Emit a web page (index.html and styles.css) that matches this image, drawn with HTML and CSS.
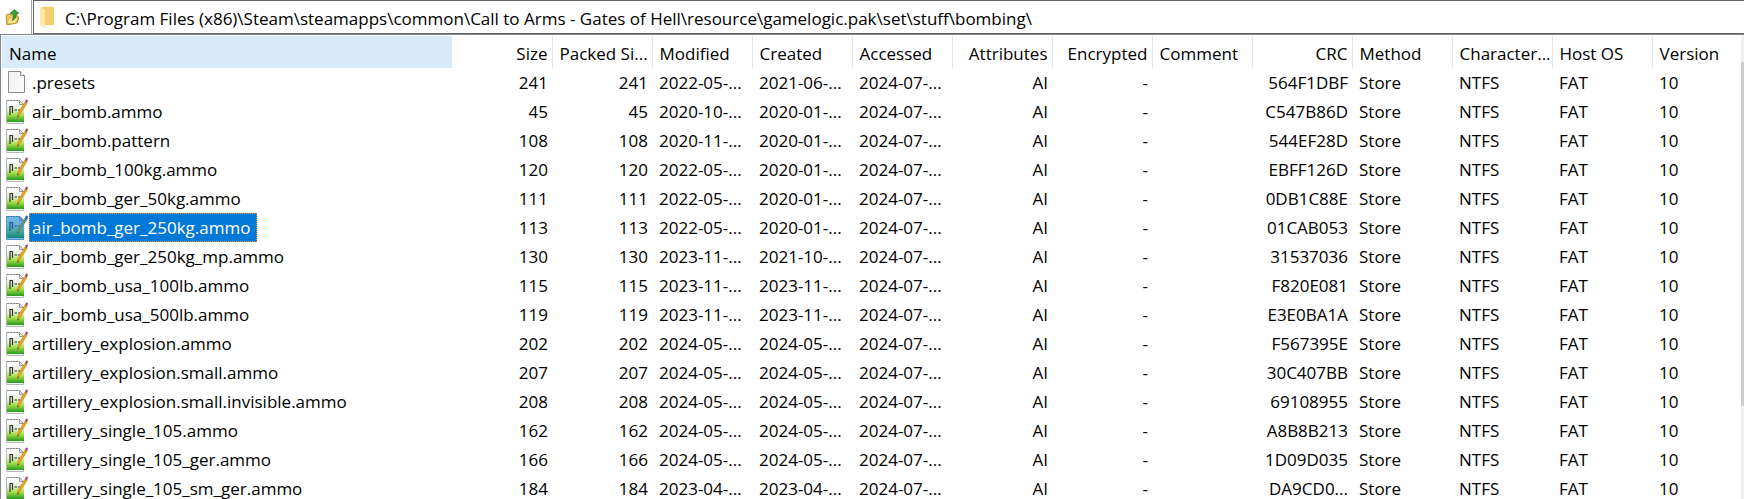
FILE: index.html
```html
<!DOCTYPE html>
<html lang="en">
<head>
  <meta charset="UTF-8">
  <meta name="viewport" content="width=device-width, initial-scale=1.0">
  <title>bombing</title>
  <link rel="stylesheet" href="styles.css">
</head>
<body>

  <!-- shared icons -->
  <svg class="defs" aria-hidden="true">
    <defs>
      <linearGradient id="green" x1="0" y1="0" x2="0" y2="1">
        <stop offset="0" stop-color="#f1f4ec"/>
        <stop offset="0.3" stop-color="#e2efd0"/>
        <stop offset="0.6" stop-color="#a4de48"/>
        <stop offset="1" stop-color="#259a1c"/>
      </linearGradient>
      <linearGradient id="paper" x1="0" y1="0" x2="1" y2="1">
        <stop offset="0" stop-color="#f1f2f3"/>
        <stop offset="1" stop-color="#fafbfc"/>
      </linearGradient>
    </defs>
    <symbol id="icon-file" viewBox="0 0 24 26">
      <path d="M4.5 1.500h12l4 4v17h-16z" fill="url(#paper)" stroke="#8c8c8c"/>
      <path d="M16.500 1.500v4h4" fill="#fff" stroke="#8c8c8c"/>
    </symbol>
    <symbol id="icon-note" viewBox="0 0 24 26">
      <path d="M2.500 1.500h13l4 4v19h-17z" fill="#fbfbfb" stroke="#b4b8b4"/>
      <path d="M3 1.500h13" stroke="#888" stroke-dasharray="2 1"/>
      <path d="M15.500 1.500v4h4z" fill="#e4e4e4" stroke="#999"/>
      <path d="M3 6h17v17H3z" fill="url(#green)"/>
      <path d="M6 16V7.500M8.500 7.500V14M5.500 7.500H9M10.500 11h2.500M14 11h2" fill="none" stroke="#333" stroke-width="1.200"/>
      <path d="M13.500 18.500l0.500-4.500 7-11 2 1.500-7 11z" fill="#e8a520" stroke="#b87818" stroke-width="0.500"/>
      <path d="M21 3l1-2.500 2 0.500-1 3.500z" fill="#9a4a62"/>
      <path d="M13.500 18.500l0.200-2 1.200 0.800z" fill="#333"/>
    </symbol>
  </svg>

  <div class="toolbar">
    <button class="up" type="button" aria-label="Up one level">
      <svg width="16" height="16" viewBox="0 0 16 16">
        <path d="M1 6l4-1 1 1 6-1v3l2 0-2 6-10 2z" fill="#f0cf5a" stroke="#b89030"/>
        <path d="M2 15l2-6 9-1-2 6z" fill="#fbe88c" stroke="#c8a040" stroke-width="0.700"/>
        <path d="M5 4.500L9.500 0.500 14 4.500h-3c0.500 4-1 6-4 7 1.500-2 1.700-4 1.200-7z" fill="#35a535" stroke="#14701c" stroke-width="0.700"/>
      </svg>
    </button>
    <div class="address">
      <svg width="14" height="22" viewBox="0 0 14 22">
        <path d="M2 1h12v18H2z" fill="#f5cf6c"/>
        <path d="M0 1l5 3v18l-5-3z" fill="#ffe9a8"/>
      </svg>
      <input type="text" aria-label="Path" value="C:\Program Files (x86)\Steam\steamapps\common\Call to Arms - Gates of Hell\resource\gamelogic.pak\set\stuff\bombing\">
    </div>
  </div>

  <div class="panel">
    <table>
      <thead>
        <tr>
          <th class="name sorted">Name</th>
          <th class="num">Size</th>
          <th class="num">Packed Si...</th>
          <th>Modified</th>
          <th>Created</th>
          <th>Accessed</th>
          <th class="num">Attributes</th>
          <th class="num">Encrypted</th>
          <th>Comment</th>
          <th class="num">CRC</th>
          <th>Method</th>
          <th>Character...</th>
          <th>Host OS</th>
          <th class="last">Version</th>
        </tr>
      </thead>
      <tbody id="files"></tbody>
    </table>
    <div class="scrollbar"><div class="thumb"></div></div>
  </div>

  <script>
    // name, size, modified, created, crc
    const files = [
      [".presets", 241, "2022-05-...", "2021-06-...", "564F1DBF"],
      ["air_bomb.ammo", 45, "2020-10-...", "2020-01-...", "C547B86D"],
      ["air_bomb.pattern", 108, "2020-11-...", "2020-01-...", "544EF28D"],
      ["air_bomb_100kg.ammo", 120, "2022-05-...", "2020-01-...", "EBFF126D"],
      ["air_bomb_ger_50kg.ammo", 111, "2022-05-...", "2020-01-...", "0DB1C88E"],
      ["air_bomb_ger_250kg.ammo", 113, "2022-05-...", "2020-01-...", "01CAB053"],
      ["air_bomb_ger_250kg_mp.ammo", 130, "2023-11-...", "2021-10-...", "31537036"],
      ["air_bomb_usa_100lb.ammo", 115, "2023-11-...", "2023-11-...", "F820E081"],
      ["air_bomb_usa_500lb.ammo", 119, "2023-11-...", "2023-11-...", "E3E0BA1A"],
      ["artillery_explosion.ammo", 202, "2024-05-...", "2024-05-...", "F567395E"],
      ["artillery_explosion.small.ammo", 207, "2024-05-...", "2024-05-...", "30C407BB"],
      ["artillery_explosion.small.invisible.ammo", 208, "2024-05-...", "2024-05-...", "69108955"],
      ["artillery_single_105.ammo", 162, "2024-05-...", "2024-05-...", "A8B8B213"],
      ["artillery_single_105_ger.ammo", 166, "2024-05-...", "2024-05-...", "1D09D035"],
      ["artillery_single_105_sm_ger.ammo", 184, "2023-04-...", "2023-04-...", "DA9CD0..."]
    ];
    const selected = "air_bomb_ger_250kg.ammo";

    document.getElementById("files").innerHTML = files.map(([name, size, modified, created, crc]) => `
      <tr class="${name === selected ? "selected" : ""}">
        <td><div class="file">
          <svg width="24" height="26">
            <use href="#${name === ".presets" ? "icon-file" : "icon-note"}"/>
            <path class="tint" d="M2 1h14l4 4 2-4 2 0v3l-4 5v16H2z"/>
          </svg>
          <span class="label">${name}</span>
        </div></td>
        <td class="num">${size}</td>
        <td class="num">${size}</td>
        <td>${modified}</td>
        <td>${created}</td>
        <td>2024-07-...</td>
        <td class="num">AI</td>
        <td class="num">-</td>
        <td></td>
        <td class="num">${crc}</td>
        <td>Store</td>
        <td>NTFS</td>
        <td>FAT</td>
        <td>10</td>
      </tr>`).join("");
  </script>
</body>
</html>
```
FILE: styles.css
```css
* {
  box-sizing: border-box;
}
body {
  margin: 0;
  background: #fff;
  color: #000;
  font-family: "Open Sans", "Noto Sans", sans-serif;
  font-size: 17px;
  overflow: hidden;
}
.defs {
  position: absolute;
  width: 0;
  height: 0;
}
.toolbar {
  display: flex;
  height: 34px;
}
.up {
  width: 32px;
  padding: 0 0 0 5px;
  border: none;
  border-right: 1px solid #a0a0a0;
  background: #fff;
}
.up svg {
  display: block;
}
.address {
  flex: 1;
  display: flex;
  align-items: center;
  gap: 11px;
  margin-left: 1px;
  padding-left: 6px;
  border: 1px solid #646464;
  border-right: none;
}
.address input {
  flex: 1;
  height: 32px;
  padding: 2px 0 0;
  border: none;
  outline: none;
  background: none;
  color: inherit;
  font: inherit;
}
.panel {
  display: flex;
  border-top: 1px solid #828790;
  border-left: 1px solid #828790;
}
table {
  flex: 1;
  table-layout: fixed;
  width: 100%;
  margin: 1px 0 0 1px;
  border-collapse: collapse;
}
th, td {
  width: 100px;
  height: 29px;
  padding: 0 4px 0 7px;
  font-weight: normal;
  line-height: 29px;
  text-align: left;
  white-space: nowrap;
}
th {
  height: 32px;
  padding-top: 2px;
  border-right: 1px solid #e5e5e5;
}
th.name {
  width: 450px;
}
th.last {
  width: auto;
  border-right: none;
}
.sorted {
  background: #d9ebf9;
  border-right: none;
}
.num {
  text-align: right;
}
.file {
  display: flex;
  align-items: center;
  gap: 1px;
  margin-left: -5px;
}
.label {
  padding: 0 7px 0 3px;
}
.tint {
  display: none;
  fill: #0078d7;
  opacity: 0.55;
}
.selected .tint {
  display: block;
}
.selected .label {
  background: #0078d7;
  color: #fff;
  outline: 1px dotted #ff8728;
  outline-offset: -1px;
}
.scrollbar {
  width: 3px;
  padding-top: 27px;
  background: #f0f0f0;
}
.thumb {
  height: 344px;
  background: #cdcdcd;
}
```
